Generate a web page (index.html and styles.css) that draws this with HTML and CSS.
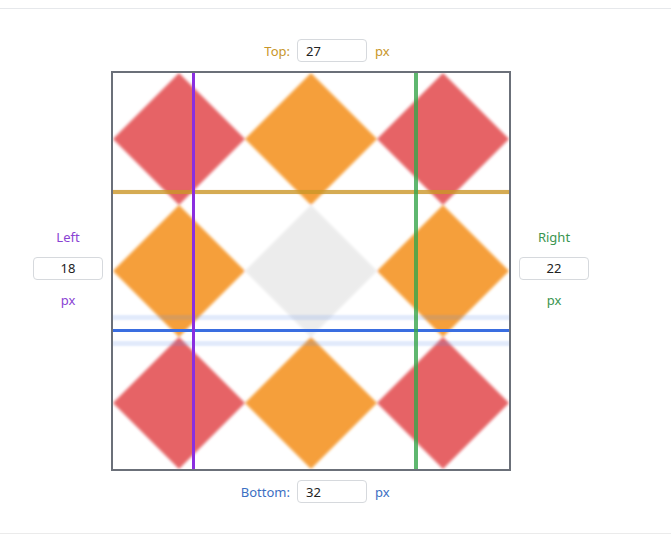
FILE: index.html
```html
<!DOCTYPE html>
<html>
<head>
<meta charset="utf-8">
<link rel="stylesheet" href="styles.css">
</head>
<body>
<div class="panel">
  <div class="edge-row top">
    <label class="edge-label" for="top">Top:</label>
    <input class="num" id="top" value="27">
    <span class="unit">px</span>
  </div>
  <div class="middle">
    <div class="side left">
      <label class="side-label" for="left">Left</label>
      <input class="num center" id="left" value="18">
      <span class="unit">px</span>
    </div>
    <div class="canvas">
      <svg class="art" viewBox="0 0 90 90" preserveAspectRatio="none">
        <defs><filter id="soft" x="-5%" y="-5%" width="110%" height="110%"><feGaussianBlur stdDeviation="0.4"/></filter></defs>
        <g filter="url(#soft)">
          <polygon fill="#e66466" points="15,0 30,15 15,30 0,15"/>
          <polygon fill="#f59f3b" points="45,0 60,15 45,30 30,15"/>
          <polygon fill="#e66466" points="75,0 90,15 75,30 60,15"/>
          <polygon fill="#f59f3b" points="15,30 30,45 15,60 0,45"/>
          <polygon fill="#ececec" points="45,30 60,45 45,60 30,45"/>
          <polygon fill="#f59f3b" points="75,30 90,45 75,60 60,45"/>
          <polygon fill="#e66466" points="15,60 30,75 15,90 0,75"/>
          <polygon fill="#f59f3b" points="45,60 60,75 45,90 30,75"/>
          <polygon fill="#e66466" points="75,60 90,75 75,90 60,75"/>
        </g>
      </svg>
      <div class="guide g-top"></div>
      <div class="guide g-bottom"></div>
      <div class="guide g-left"></div>
      <div class="guide g-right"></div>
    </div>
    <div class="side right">
      <label class="side-label" for="right">Right</label>
      <input class="num center" id="right" value="22">
      <span class="unit">px</span>
    </div>
  </div>
  <div class="edge-row bottom">
    <label class="edge-label" for="bottom">Bottom:</label>
    <input class="num" id="bottom" value="32">
    <span class="unit">px</span>
  </div>
</div>
</body>
</html>
```
FILE: styles.css
```css
html, body {
  margin: 0;
  padding: 0;
  background: #fff;
  font-family: "Noto Sans", "Open Sans", sans-serif;
  font-size: 13px;
}
.panel {
  margin-top: 8px;
  border-top: 1px solid #e6e8eb;
  border-bottom: 1px solid #ebebeb;
  padding: 30px 0 30px 33px;
}
.edge-row {
  display: grid;
  grid-template-columns: 257px 70px auto;
  column-gap: 7px;
  align-items: center;
  height: 23px;
}
.edge-row .unit { margin-left: 1px; }
.edge-label { text-align: right; }
.top { color: #c8962a; margin-bottom: 9px; }
.bottom { color: #3b6fc3; margin-top: 9px; }
.num {
  box-sizing: border-box;
  width: 70px;
  height: 23px;
  border: 1px solid #d6d9dd;
  border-radius: 4px;
  padding: 0 8px;
  font-family: inherit;
  font-size: 13px;
  color: #222;
  background: #fff;
  outline: none;
}
.num.center { text-align: center; }
.middle {
  display: grid;
  grid-template-columns: 70px 400px 70px;
  column-gap: 8px;
  align-items: center;
}
.side {
  display: flex;
  flex-direction: column;
  align-items: center;
  gap: 11px;
  margin-top: -6px;
}
.left { color: #8a43d3; }
.right { color: #3a9550; }
.canvas {
  position: relative;
  box-sizing: border-box;
  width: 400px;
  height: 400px;
  border: 2px solid #6b7079;
  background: #fff;
  overflow: hidden;
}
.art {
  display: block;
  width: 396px;
  height: 396px;
}
.guide { position: absolute; }
.g-top {
  left: 0; right: 0;
  top: 117px;
  height: 4px;
  background: rgba(203, 150, 40, 0.8);
  box-shadow: 0 0 1px rgba(203,150,40,0.5);
}
.g-bottom {
  left: 0; right: 0;
  top: 256px;
  height: 3px;
  background: #3a6ee0;
  box-shadow: 0 -13px 2px 1px rgba(90, 140, 235, 0.18), 0 13px 2px 1px rgba(90, 140, 235, 0.18);
}
.g-left {
  top: 0; bottom: 0;
  left: 79px;
  width: 3px;
  background: #8a2fe0;
}
.g-right {
  top: 0; bottom: 0;
  left: 301px;
  width: 4px;
  background: rgba(55, 165, 75, 0.8);
}
```
